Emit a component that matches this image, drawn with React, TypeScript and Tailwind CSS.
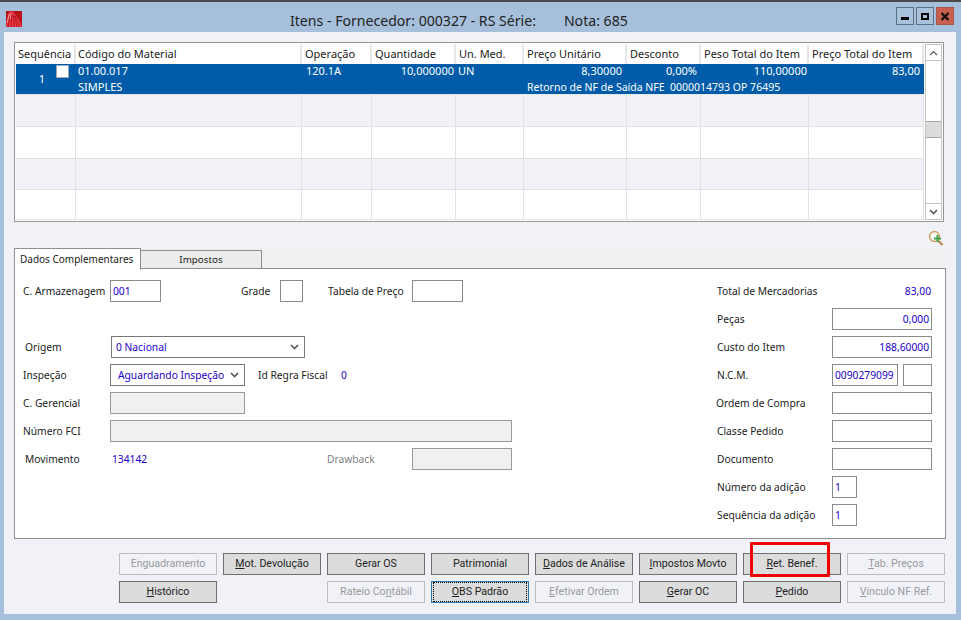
import React from "react";

const FONT = "font-['Noto_Sans','DejaVu_Sans',sans-serif]";
const cols = "grid grid-cols-[60px_226px_70px_84px_68px_103px_74px_108px_115px]";
const headers = ["Sequência", "Código do Material", "Operação", "Quantidade", "Un. Med.", "Preço Unitário", "Desconto", "Peso Total do Item", "Preço Total do Item"];

function Chevron({ up = false, className = "" }: { up?: boolean; className?: string }) {
  return (
    <svg width="9" height="6" viewBox="0 0 9 6" className={className}>
      <path d={up ? "M1 5 L4.5 1.5 L8 5" : "M1 1 L4.5 4.5 L8 1"} fill="none" stroke="#555" strokeWidth={up ? 1.2 : 1.6} />
    </svg>
  );
}

function Logo() {
  return (
    <svg width="16" height="16" viewBox="0 0 16 16">
      <rect width="16" height="16" fill="#b8141c" />
      <path d="M0 16 L3 1 Q5 -1 8 2 Q13 8 16 16 Z" fill="#ee3a44" />
      <path d="M2 16 L4.5 2 M5 16 L6 3 M8 16 L7.5 4 M11 16 L8.5 5 M14 16 L9 5" stroke="#a80e18" strokeWidth="0.8" fill="none" />
      <path d="M3 3 L1 12 M5 2 L4 8" stroke="#fbb4b8" strokeWidth="0.8" fill="none" />
    </svg>
  );
}

function ZoomIcon() {
  return (
    <svg width="16" height="16" viewBox="0 0 16 16">
      <circle cx="6.5" cy="6.5" r="5" fill="#f4f6f0" stroke="#cf9f63" strokeWidth="1.4" />
      <path d="M10.5 11 L14.5 15" stroke="#bd8a52" strokeWidth="2.4" />
      <path d="M8.5 5 h2 v2.5 h2.5 v2 h-2.5 v2.5 h-2 v-2.5 h-2.5 v-2 h2.5 Z" fill="#3fa24a" />
    </svg>
  );
}

function WinBtn({ kind }: { kind: "min" | "max" | "close" }) {
  const base = "w-[18px] h-[18px] border flex items-center justify-center";
  if (kind === "close")
    return (
      <div className={`${base} border-[#a8584c] bg-[#c9604f]`}>
        <svg width="10" height="9" viewBox="0 0 10 9">
          <path d="M1.5 1 L8.5 8 M8.5 1 L1.5 8" stroke="#111" strokeWidth="2.2" />
        </svg>
      </div>
    );
  return (
    <div className={`${base} border-[#5b7188] bg-[#a9c2dc]`}>
      {kind === "min" ? (
        <div className="w-[8px] h-[3px] bg-black mt-[5px]" />
      ) : (
        <div className="w-[8px] h-[7px] border-2 border-black" />
      )}
    </div>
  );
}

function Input({ w, value = "", right = false, disabled = false }: { w: string; value?: string; right?: boolean; disabled?: boolean }) {
  return (
    <div
      className={`${w} h-[22px] shrink-0 border border-[#8a8a8a] flex items-center px-[2px] text-[#2200c8] overflow-hidden ${
        right ? "justify-end" : ""
      } ${disabled ? "bg-[#f0f0f0] border-[#9a9a9a]" : "bg-white"}`}
    >
      {value ? <span>{value}</span> : null}
    </div>
  );
}

function Select({ w, value, pl }: { w: string; value: string; pl: string }) {
  return (
    <div className={`${w} h-[22px] shrink-0 border border-[#777] bg-white flex items-center justify-between ${pl} pr-[5px] text-[#2200c8]`}>
      <span className="whitespace-nowrap">{value}</span>
      <Chevron />
    </div>
  );
}

function Btn({ children, disabled = false, focused = false }: { children: React.ReactNode; disabled?: boolean; focused?: boolean }) {
  const tone = focused
    ? "border-[#2b7ab8] bg-[#dcdcdc] text-[#222]"
    : disabled
    ? "border-[#bdbdbd] bg-[#f0f2f8] text-[#9a9a9a]"
    : "border-[#707070] bg-[#dcdcdc] text-[#222]";
  return (
    <div className={`h-[22px] border ${tone} flex items-center justify-center whitespace-nowrap font-['Roboto',sans-serif] text-[10.6px]`}>
      {focused ? (
        <span className="w-full h-full m-px border border-dotted border-black flex items-center justify-center">{children}</span>
      ) : (
        children
      )}
    </div>
  );
}

function Row({ children }: { children?: React.ReactNode }) {
  return <div className="h-[22px] flex items-center">{children}</div>;
}

function Label({ w, children, className = "" }: { w: string; children: React.ReactNode; className?: string }) {
  return <span className={`${w} shrink-0 whitespace-nowrap text-[#222] ${className}`}>{children}</span>;
}

export default function App() {
  return (
    <div className={`${FONT} w-[961px] h-[620px] bg-[#a6c0db] border-t-2 border-[#4a4a4a] text-[11px] leading-none text-[#222] overflow-hidden flex flex-col`}>
      {/* Title bar */}
      <div className="h-[30px] shrink-0 flex items-center pl-[6px] pr-[7px]">
        <div className="mt-[4px]"><Logo /></div>
        <div className="flex-1 flex text-[14.1px] text-[#222] pl-[268px] mt-[8px] whitespace-nowrap gap-[28px]">
          <span>Itens - Fornecedor: 000327 - RS Série:</span>
          <span>Nota: 685</span>
        </div>
        <div className="flex gap-[2px] -mt-[2px]">
          <WinBtn kind="min" />
          <WinBtn kind="max" />
          <WinBtn kind="close" />
        </div>
      </div>

      {/* Client */}
      <div className="ml-[4px] w-[952px] h-[582px] bg-[#f0f2f8] pl-[10px] pt-[10px] flex flex-col">
        {/* Items grid */}
        <div className="w-[930px] h-[180px] shrink-0 border border-[#969696] bg-white p-px flex">
          <div className="w-[908px] flex flex-col">
            <div className={`${cols} h-[20px] bg-[#e6e6e6]`}>
              {headers.map((h, i) => (
                <div key={h} className={`bg-white mr-[2px] flex items-center whitespace-nowrap text-[#222] ${i >= 2 ? "pl-[3px]" : "pl-[2px]"}`}>{h}</div>
              ))}
            </div>
            <div className={`${cols} h-[32px] bg-[#005ca8] text-white border-b border-[#e8e8e8]`}>
              <div className="relative flex items-center justify-end pr-[31px] pb-[2px]">
                1
                <div className="absolute right-[7px] top-px w-[13px] h-[13px] bg-white border border-[#9aa5b5]" />
              </div>
              <div className="pl-[2px] flex flex-col justify-between pt-[1px] pb-[2px]">
                <span>01.00.017</span>
                <span>SIMPLES</span>
              </div>
              <div className="pl-[4px] pt-[1px]">120.1A</div>
              <div className="text-right pr-[2px] pt-[1px]">10,000000</div>
              <div className="pl-[2px] pt-[1px]">UN</div>
              <div className="relative text-right pr-[5px] pt-[1px]">
                8,30000
                <span className="absolute left-[3px] top-[18px] whitespace-pre text-[10.5px]">Retorno de NF de Saída NFE  0000014793 OP 76495</span>
              </div>
              <div className="text-right pr-[4px] pt-[1px]">0,00%</div>
              <div className="text-right pr-[2px] pt-[1px]">110,00000</div>
              <div className="text-right pr-[4px] pt-[1px]">83,00</div>
            </div>
            {["bg-[#f0f2f8] h-[32px]", "bg-white h-[32px]", "bg-[#f0f2f8] h-[32px]", "bg-white h-[30px]"].map((c, i) => (
              <div key={i} className={`${cols} ${c} border-b border-[#e2e2e2]`}>
                {headers.map((h) => (
                  <div key={h} className="border-r border-[#e2e2e2]" />
                ))}
              </div>
            ))}
          </div>
          <div className="w-[18px] ml-[1px] border border-[#c4c4c4] bg-white flex flex-col">
            <div className="h-[16px] border-b border-[#c4c4c4] flex items-center justify-center"><Chevron up /></div>
            <div className="flex-1 flex flex-col pt-[60px]">
              <div className="h-[17px] bg-[#dcdcdc] border-y border-[#a6a6a6]" />
            </div>
            <div className="h-[16px] border-t border-[#c4c4c4] flex items-center justify-center"><Chevron /></div>
          </div>
        </div>

        {/* zoom icon strip */}
        <div className="h-[26px] w-[930px] shrink-0 flex items-center justify-end pt-[6px]">
          <ZoomIcon />
        </div>

        {/* Tabs */}
        <div className="w-[932px] h-[20px] shrink-0 bg-[#f0f0f0] flex items-start relative">
          <div className="w-[127px] h-[22px] bg-white border border-b-0 border-[#8f8f8f] flex items-center pl-[5px] relative z-10 text-[#222] pb-[2px] text-[10px] whitespace-nowrap">Dados Complementares</div>
          <div className="w-[121px] h-[18px] mt-[2px] bg-[#ececec] border border-l-0 border-b-0 border-[#8f8f8f] flex items-center justify-center pt-[1px] text-[#222] text-[9.8px]">Impostos</div>
        </div>

        {/* Panel */}
        <div className="w-[932px] h-[271px] shrink-0 bg-white border border-[#8f8f8f] pt-[11px] flex text-[10.25px]">
          <div className="w-[702px] shrink-0 flex flex-col gap-[6px] pl-[8px]">
            <Row>
              <Label w="w-[87px]">C. Armazenagem</Label>
              <Input w="w-[51px]" value="001" />
              <Label w="w-[39px]" className="ml-[80px]">Grade</Label>
              <Input w="w-[23px]" />
              <Label w="w-[84px]" className="ml-[25px]">Tabela de Preço</Label>
              <Input w="w-[51px]" />
            </Row>
            <Row />
            <Row>
              <Label w="w-[88px]" className="pl-[2px]">Origem</Label>
              <Select w="w-[194px]" value="0 Nacional" pl="pl-[4px]" />
            </Row>
            <Row>
              <Label w="w-[87px]">Inspeção</Label>
              <Select w="w-[135px]" value="Aguardando Inspeção" pl="pl-[7px]" />
              <Label w="w-[83px]" className="ml-[13px]">Id Regra Fiscal</Label>
              <span className="text-[#2200c8]">0</span>
            </Row>
            <Row>
              <Label w="w-[87px]">C. Gerencial</Label>
              <Input w="w-[135px]" disabled />
            </Row>
            <Row>
              <Label w="w-[87px]">Número FCI</Label>
              <Input w="w-[402px]" disabled />
            </Row>
            <Row>
              <Label w="w-[89px]" className="pl-[2px]">Movimento</Label>
              <span className="w-[215px] shrink-0 text-[#2200c8]">134142</span>
              <span className="w-[85px] shrink-0 text-[#808080]">Drawback</span>
              <Input w="w-[100px]" disabled />
            </Row>
          </div>
          <div className="flex flex-col gap-[6px]">
            <Row>
              <Label w="w-[115px]">Total de Mercadorias</Label>
              <span className="w-[100px] text-right pr-[1px] text-[#2200c8]">83,00</span>
            </Row>
            <Row><Label w="w-[115px]">Peças</Label><Input w="w-[100px]" value="0,000" right /></Row>
            <Row><Label w="w-[115px]">Custo do Item</Label><Input w="w-[100px]" value="188,60000" right /></Row>
            <Row>
              <Label w="w-[115px]">N.C.M.</Label>
              <Input w="w-[66px]" value="0090279099" />
              <div className="ml-[5px]"><Input w="w-[29px]" /></div>
            </Row>
            <Row><Label w="w-[115px]" className="-ml-px">Ordem de Compra</Label><div className="ml-px"><Input w="w-[100px]" /></div></Row>
            <Row><Label w="w-[115px]">Classe Pedido</Label><Input w="w-[100px]" /></Row>
            <Row><Label w="w-[115px]">Documento</Label><Input w="w-[100px]" /></Row>
            <Row><Label w="w-[115px]">Número da adição</Label><Input w="w-[25px]" value="1" /></Row>
            <Row><Label w="w-[115px]">Sequência da adição</Label><Input w="w-[25px]" value="1" /></Row>
          </div>
        </div>

        {/* Buttons */}
        <div className="mt-[14px] ml-[105px] grid grid-cols-[repeat(8,98px)] auto-rows-[22px] gap-[6px]">
          <Btn disabled>Enguadramento</Btn>
          <Btn><span><u>M</u>ot. Devolução</span></Btn>
          <Btn>Gerar OS</Btn>
          <Btn>Patrimonial</Btn>
          <Btn><span><u>D</u>ados de Análise</span></Btn>
          <Btn><span><u>I</u>mpostos Movto</span></Btn>
          <div className="relative">
            <Btn><span><u>R</u>et. Benef.</span></Btn>
            <div className="absolute left-[7px] top-[-11px] w-[80px] h-[35px] border-[3px] border-[#f00000] rounded-[1px]" />
          </div>
          <Btn disabled><span><u>T</u>ab. Preços</span></Btn>

          <Btn><span><u>H</u>istórico</span></Btn>
          <div />
          <Btn disabled><span>Rateio Co<u>n</u>tábil</span></Btn>
          <Btn focused><span><u>O</u>BS Padrão</span></Btn>
          <Btn disabled><span><u>E</u>fetivar Ordem</span></Btn>
          <Btn><span><u>G</u>erar OC</span></Btn>
          <Btn><span><u>P</u>edido</span></Btn>
          <Btn disabled><span><u>V</u>ínculo NF Ref.</span></Btn>
        </div>
      </div>
    </div>
  );
}
